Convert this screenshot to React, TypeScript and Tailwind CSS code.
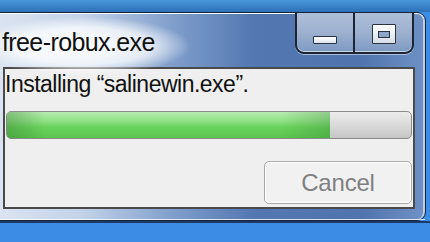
const font = { fontFamily: '"Liberation Sans", Arial, sans-serif' };

function MinimizeIcon() {
  return <div className="h-[8px] w-[24px] rounded-[1px] border border-[#2a3344] bg-gradient-to-b from-white to-[#dfe4ec]" />;
}

function MaximizeIcon() {
  return (
    <div className="flex h-[20px] w-[24px] items-center justify-center rounded-[1px] border border-[#2a3344] bg-gradient-to-b from-white to-[#d8dee8]">
      <div className="h-[7px] w-[12px] border border-[#2a3344] bg-[#8ea6c8]" />
    </div>
  );
}

function TitleButtons() {
  return (
    <div className="flex h-[41px] rounded-b-[9px] border-x-2 border-b-2 border-[#1b2535] bg-gradient-to-b from-[#aebfd8] via-[#9db1cf] to-[#7d99c2] shadow-[inset_0_-1px_0_rgba(255,255,255,0.6),0_1px_0_rgba(255,255,255,0.5)]">
      <div className="flex w-[56px] items-end justify-center pb-[8px]">
        <MinimizeIcon />
      </div>
      <div className="w-[2px] bg-[#1b2535]" />
      <div className="flex w-[57px] items-end justify-center pb-[8px]">
        <MaximizeIcon />
      </div>
    </div>
  );
}

export default function App() {
  return (
    <div className="flex h-[242px] w-[430px] flex-col overflow-hidden bg-[#3c8be4]" style={font}>
      <div className="h-[12px] shrink-0 bg-gradient-to-b from-[#4a98dc] to-[#2c70b8]" />
      <div className="-ml-[4px] mr-[4px] flex h-[209px] shrink-0 flex-col rounded-tr-[9px] rounded-br-[9px] border border-[#16243a] bg-[linear-gradient(to_right,#dbe4f1_0%,#c3d2e8_20%,#7d9cca_42%,#5277b1_60%,#4f74ae_85%,#6f92c6_100%)] shadow-[inset_0_1px_0_#ffffff,inset_-2px_0_0_rgba(255,255,255,0.55)]">
        <div className="relative flex h-[53px] shrink-0 items-start justify-between pl-[5px] pr-[11px]">
          <div className="pointer-events-none absolute left-[-20px] top-[4px] h-[58px] w-[212px] rounded-full bg-[radial-gradient(ellipse_at_center,rgba(255,255,255,0.95)_0%,rgba(255,255,255,0.75)_45%,rgba(255,255,255,0)_72%)]" />
          <div className="relative mt-[17px] text-[25px] leading-none tracking-[-0.6px] text-[#111]">free-robux.exe</div>
          <div className="relative">
            <TitleButtons />
          </div>
        </div>
        <div className="ml-[6px] mr-[10px] mt-[1px] flex h-[142px] flex-col border-2 border-[#4a4a4a] bg-[#efefef] px-[1px]">
          <div className="-ml-[1px] mt-[4px] text-[23px] leading-none tracking-[-0.5px] text-[#111]">Installing “salinewin.exe”.</div>
          <div className="mt-[15px] flex h-[28px] overflow-hidden rounded-[5px] border border-[#8c8c8c] bg-gradient-to-b from-[#ececec] via-[#dadada] to-[#c6c6c6]">
            <div className="h-full w-[323px] bg-[linear-gradient(to_right,rgba(40,110,40,0.35)_0%,rgba(40,110,40,0)_12%,rgba(40,110,40,0)_85%,rgba(40,110,40,0.25)_100%),linear-gradient(to_bottom,#b6ecb0_0%,#8fe084_35%,#68d25b_60%,#5cc34f_100%)]" />
          </div>
          <div className="mt-[22px] flex justify-end">
            <div className="flex h-[43px] w-[148px] items-center justify-center rounded-[5px] border-[1.5px] border-[#a9a9a9] bg-[#f1f1f1] text-[24px] leading-none tracking-[-0.2px] text-[#808080] shadow-[inset_0_0_0_1px_#ffffff]">
              Cancel
            </div>
          </div>
        </div>
        <div className="flex-1 shadow-[inset_0_-1px_0_rgba(255,255,255,0.8)]" />
      </div>
      <div className="flex-1 border-t-2 border-[#1d3a66] bg-[#3c8be4]" />
    </div>
  );
}
